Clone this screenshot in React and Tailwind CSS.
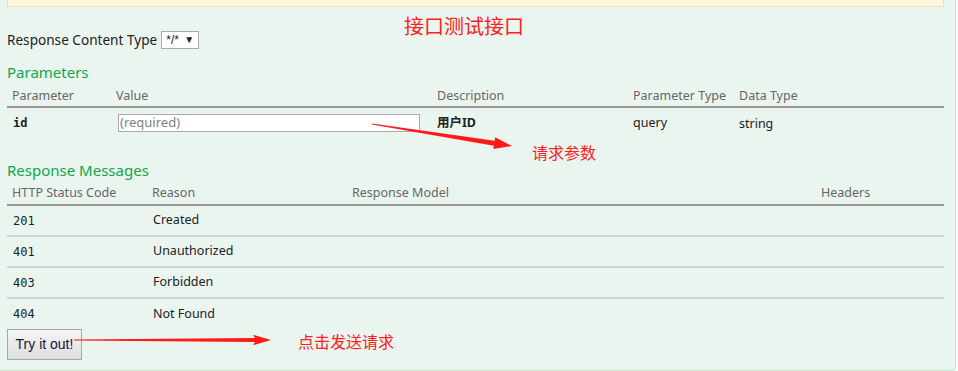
import React from 'react';

const sans = { fontFamily: '"Noto Sans", "Noto Sans CJK SC", sans-serif' };

const paramCols = 'grid grid-cols-[104px_321px_196px_106px_1fr]';
const respCols = 'grid grid-cols-[140px_200px_469px_1fr]';

const responses = [
  { code: '201', reason: 'Created' },
  { code: '401', reason: 'Unauthorized' },
  { code: '403', reason: 'Forbidden' },
  { code: '404', reason: 'Not Found' },
];

const Arrows = () => (
  <svg className="absolute inset-0 pointer-events-none" width="956" height="371">
    <polygon
      fill="#ff1a1a"
      points="372.1,123.5 494.6,140.7 495.1,137.3 512,146 493.3,149.1 493.8,145.7 371.9,124.5"
    />
    <polygon
      fill="#ff1a1a"
      points="74,339.4 255,338 253,334.8 271,340 253,345.2 255,342 74,340.6"
    />
  </svg>
);

const App = () => {
  return (
    <div
      className="relative w-[956px] h-[371px] bg-[#ebf5ef] border-r border-b border-[#c3e8d1] rounded-br-[4px] px-[7px] text-[#222]"
      style={sans}
    >
      {/* notes bar */}
      <div className="w-[937px] h-[7px] bg-[#fcf6db] border-b border-x border-[#e5e0c6]" />

      {/* content type */}
      <div className="mt-[24px] h-[18px] flex items-center gap-[4px] text-[13.6px]">
        <span>Response Content Type</span>
        <div className="w-[38px] h-[18px] bg-white border border-[#aaa] flex items-center justify-between px-[4px] text-[12px] leading-none" style={{ fontFamily: '"Liberation Sans", sans-serif' }}>
          <span>*/*</span>
          <span className="text-[10px]">▼</span>
        </div>
      </div>

      {/* parameters */}
      <h4 className="mt-[13px] h-[20px] flex items-center text-[15px] text-[#10a54a]">Parameters</h4>
      <div className="w-[937px]">
        <div className={`${paramCols} mt-[4px] h-[22px] border-b-2 border-[#999] items-center text-[12.5px] text-[#666]`}>
          <div className="pl-[5px]">Parameter</div>
          <div className="pl-[5px]">Value</div>
          <div className="pl-[5px]">Description</div>
          <div className="pl-[5px]">Parameter Type</div>
          <div className="pl-[5px]">Data Type</div>
        </div>
        <div className={`${paramCols} h-[30px] items-center text-[12.5px]`}>
          <div className="pl-[6px] font-bold text-[12px]" style={{ fontFamily: '"DejaVu Sans Mono", monospace' }}>id</div>
          <div className="pl-[7px]">
            <div className="w-[302px] h-[18px] bg-white border border-[#aaa] flex items-center px-[1px] text-[13px] text-[#808080]">
              (required)
            </div>
          </div>
          <div className="pl-[5px] font-bold">用户ID</div>
          <div className="pl-[5px]">query</div>
          <div className="pl-[5px] pt-[2px]">string</div>
        </div>
      </div>

      {/* response messages */}
      <h4 className="mt-[22px] h-[20px] flex items-center text-[15px] text-[#10a54a]">Response Messages</h4>
      <div className="w-[937px]">
        <div className={`${respCols} mt-[3px] h-[23px] border-b-2 border-[#999] items-center text-[12.5px] text-[#666]`}>
          <div className="pl-[5px]">HTTP Status Code</div>
          <div className="pl-[5px]">Reason</div>
          <div className="pl-[5px]">Response Model</div>
          <div className="pl-[5px]">Headers</div>
        </div>
        {responses.map((r, i) => (
          <div
            key={r.code}
            className={`${respCols} items-center text-[12.5px] ${i < responses.length - 1 ? 'h-[31px] border-b-2 border-[#cfd3d0]' : 'h-[30px]'}`}
          >
            <div className="pl-[6px] text-[12px]" style={{ fontFamily: '"DejaVu Sans Mono", monospace' }}>{r.code}</div>
            <div className="pl-[6px]">{r.reason}</div>
            <div />
            <div />
          </div>
        ))}
      </div>

      <button
        className="w-[75px] h-[31px] bg-gradient-to-b from-[#f6f6f6] to-[#dedede] border border-[#a8a8a8] text-[14px] text-[#1a1240]"
        style={{ fontFamily: '"Liberation Sans", Arial, sans-serif' }}
      >
        Try it out!
      </button>

      {/* annotations */}
      <Arrows />
      <span className="absolute left-[404px] top-[13px] text-[20px] leading-[26px] text-[#ff2020]" style={{ fontFamily: '"Noto Sans CJK SC", sans-serif' }}>
        接口测试接口
      </span>
      <span className="absolute left-[532px] top-[141px] text-[16px] leading-[22px] text-[#ff2020]" style={{ fontFamily: '"Noto Sans CJK SC", sans-serif' }}>
        请求参数
      </span>
      <span className="absolute left-[298px] top-[330px] text-[16px] leading-[22px] text-[#ff2020]" style={{ fontFamily: '"Noto Sans CJK SC", sans-serif' }}>
        点击发送请求
      </span>
    </div>
  );
};

export default App;
